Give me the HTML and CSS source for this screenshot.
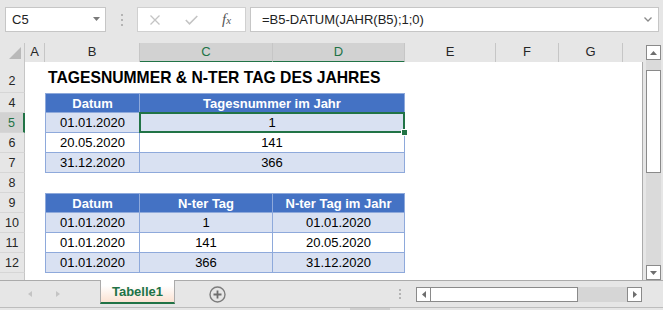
FILE: index.html
```html
<!DOCTYPE html>
<html lang="de">
<head>
<meta charset="utf-8">
<title>Tagesnummer</title>
<link rel="stylesheet" href="styles.css">
</head>
<body>
<div class="app">
  <div class="fbar">
    <div class="namebox"><span>C5</span><svg class="nb-arrow" width="7" height="4" viewBox="0 0 7 4"><polygon points="0,0 7,0 3.5,4" fill="#7a7a7a"/></svg></div>
    <div class="vdots"><i></i><i></i><i></i></div>
    <div class="fxbox">
      <svg class="ic-x" width="10" height="10" viewBox="0 0 10 10"><path d="M0.5 0.5 L9.5 9.5 M9.5 0.5 L0.5 9.5" stroke="#c4c4c4" stroke-width="1.3" fill="none"/></svg>
      <svg class="ic-ok" width="13" height="10" viewBox="0 0 13 10"><polyline points="0.8,5 4.5,8.8 12.3,1" stroke="#c4c4c4" stroke-width="1.6" fill="none"/></svg>
      <span class="fx">f<small>x</small></span>
    </div>
    <div class="finput"><span>=B5-DATUM(JAHR(B5);1;0)</span><svg width="8" height="5" viewBox="0 0 8 5"><polyline points="0.5,0.5 4,4 7.5,0.5" stroke="#8a8a8a" stroke-width="1.3" fill="none"/></svg></div>
  </div>

  <div class="main">
    <div class="sheet">
      <div class="row colhead">
        <div class="ch corner"><svg width="12" height="12" viewBox="0 0 12 12"><polygon points="12,0 12,12 0,12" fill="#b9b9b9"/></svg></div>
        <div class="ch">A</div>
        <div class="ch">B</div>
        <div class="ch sel">C</div>
        <div class="ch sel">D</div>
        <div class="ch">E</div>
        <div class="ch">F</div>
        <div class="ch">G</div>
        <div class="ch last"></div>
      </div>
      <div class="body">
        <div class="row r2"><div class="rh">2</div><div class="title">TAGESNUMMER &amp; N-TER TAG DES JAHRES</div></div>
        <div class="row"><div class="rh">4</div><div class="c cb first th">Datum</div><div class="c ccd th">Tagesnummer im Jahr</div></div>
        <div class="row"><div class="rh rsel">5</div><div class="c cb first band">01.01.2020</div><div class="c ccd band selcell">1<span class="selbox"></span><span class="handle"></span></div></div>
        <div class="row"><div class="rh">6</div><div class="c cb first">20.05.2020</div><div class="c ccd">141</div></div>
        <div class="row"><div class="rh">7</div><div class="c cb first band">31.12.2020</div><div class="c ccd band">366</div></div>
        <div class="row"><div class="rh">8</div></div>
        <div class="row"><div class="rh">9</div><div class="c cb first th">Datum</div><div class="c cc th">N-ter Tag</div><div class="c cd th">N-ter Tag im Jahr</div></div>
        <div class="row"><div class="rh">10</div><div class="c cb first band">01.01.2020</div><div class="c cc band">1</div><div class="c cd band">01.01.2020</div></div>
        <div class="row"><div class="rh">11</div><div class="c cb first">01.01.2020</div><div class="c cc">141</div><div class="c cd">20.05.2020</div></div>
        <div class="row"><div class="rh">12</div><div class="c cb first band">01.01.2020</div><div class="c cc band">366</div><div class="c cd band">31.12.2020</div></div>
        <div class="row r13"><div class="rh"></div></div>
      </div>
    </div>
    <div class="vscroll">
      <div class="sbtn"><svg width="7" height="4" viewBox="0 0 7 4"><polygon points="0,4 7,4 3.5,0" fill="#6e6e6e"/></svg></div>
      <div class="vtrack"><div class="vthumb"></div></div>
      <div class="sbtn"><svg width="7" height="4" viewBox="0 0 7 4"><polygon points="0,0 7,0 3.5,4" fill="#6e6e6e"/></svg></div>
    </div>
  </div>

  <div class="tabbar">
    <div class="nav"><i class="al"></i><i class="ar"></i></div>
    <div class="tab">Tabelle1</div>
    <svg class="plus" width="17" height="17" viewBox="0 0 17 17"><circle cx="8.5" cy="8.5" r="7.5" stroke="#7d7d7d" stroke-width="1.4" fill="none"/><path d="M8.5 4.5 V12.5 M4.5 8.5 H12.5" stroke="#6e6e6e" stroke-width="1.8"/></svg>
    <div class="hdots"><i></i><i></i><i></i></div>
    <div class="hscroll">
      <div class="sbtn"><svg width="4" height="7" viewBox="0 0 4 7"><polygon points="4,0 4,7 0,3.5" fill="#6e6e6e"/></svg></div>
      <div class="hthumb"></div>
      <div class="htrack"></div>
      <div class="sbtn"><svg width="4" height="7" viewBox="0 0 4 7"><polygon points="0,0 0,7 4,3.5" fill="#6e6e6e"/></svg></div>
    </div>
  </div>
  <div class="status"><i></i></div>
</div>
</body>
</html>
```
FILE: styles.css
```css
* { box-sizing: border-box; }
html, body { margin: 0; padding: 0; }
body { width: 663px; height: 310px; overflow: hidden; font-family: "Liberation Sans", Arial, sans-serif; }

.app { width: 663px; height: 310px; background: #e6e6e6; display: flex; flex-direction: column; }

/* formula bar */
.fbar { height: 43px; flex: none; display: flex; align-items: flex-start; padding-top: 7px; padding-left: 5px; }
.namebox { width: 101px; height: 25px; background: #fff; border: 1px solid #c6c6c6; display: flex; align-items: center; justify-content: space-between; padding: 0 5px 0 6px; font-size: 13px; color: #222; }
.nb-arrow { margin-top: -2px; }
.vdots { width: 2px; height: 25px; margin-left: 15px; display: flex; flex-direction: column; justify-content: center; gap: 3px; }
.vdots i { display: block; width: 2px; height: 2px; background: #b4b4b4; }
.fxbox { width: 109px; height: 25px; margin-left: 14px; background: #fff; border: 1px solid #d0d0d0; display: flex; align-items: center; padding-left: 12px; }
.ic-ok { margin-left: 25px; }
.fx { margin-left: 24px; font-family: "Liberation Serif", "Times New Roman", serif; font-style: italic; font-size: 15px; color: #555; line-height: 1; }
.fx small { font-size: 11px; }
.finput { width: 409px; height: 25px; margin-left: 4px; background: #fff; border: 1px solid #c6c6c6; display: flex; align-items: center; justify-content: space-between; padding: 0 6px 0 11px; font-size: 13px; color: #222; }

/* main area */
.main { height: 237px; flex: none; display: flex; }
.sheet { width: 643px; flex: none; display: flex; flex-direction: column; }
.row { display: grid; grid-template-columns: 25px 20px 95px 133px 132px 91px 63px 64px 19px; height: 20px; }
.colhead { height: 19px; background: #e6e6e6; }
.ch { border-right: 1px solid #c6c6c6; border-bottom: 1px solid #ababab; font-size: 13px; color: #262626; text-align: center; line-height: 18px; }
.ch.last { border-right: none; }
.ch.sel { background: #d2d2d2; color: #217346; border-bottom: 2px solid #217346; }
.corner { display: flex; align-items: flex-end; justify-content: flex-end; padding: 0 3px 3px 0; }
.corner svg { display: block; }

.body { width: 643px; flex: 1; background: #fff; border-right: 1px solid #ababab; display: flex; flex-direction: column; }
.body .row { background: #fff; }
.rh { grid-column: 1; background: #e6e6e6; border-right: 1px solid #c6c6c6; border-bottom: 1px solid #d6d6d6; font-size: 12.5px; color: #262626; display: flex; align-items: center; justify-content: center; }
.rh.rsel { background: #d2d2d2; color: #217346; border-right: 2px solid #217346; }
.r2 { height: 31px; }
.r2 .rh { align-items: flex-end; padding-bottom: 4px; }
.r13 { height: 7px; }
.r13 .rh { border-bottom: none; }
.title { grid-column: 3 / span 6; align-self: end; padding: 0 0 6px 3px; font-size: 15.7px; font-weight: bold; line-height: 18px; white-space: nowrap; color: #000; }

.c { display: flex; align-items: center; justify-content: center; font-size: 13px; color: #000; border-right: 1px solid #8ea9db; border-bottom: 1px solid #8ea9db; white-space: nowrap; }
.c.first { border-left: 1px solid #8ea9db; }
.cb { grid-column: 3; }
.cc { grid-column: 4; }
.cd { grid-column: 5; }
.ccd { grid-column: 4 / span 2; }
.th { background: #4472c4; color: #fff; font-weight: bold; border-top: 1px solid #8ea9db; }
.band { background: #d9e1f2; }

.selcell { position: relative; }
.selbox { position: absolute; left: -1px; top: -1px; width: 266px; height: 21px; border: 2px solid #217346; z-index: 2; }
.handle { position: absolute; left: 261px; top: 16px; width: 7px; height: 7px; background: #217346; border: 1px solid #fff; z-index: 3; }

/* vertical scrollbar */
.vscroll { width: 20px; flex: none; display: flex; flex-direction: column; padding: 2px 2px 0 3px; }
.sbtn { width: 15px; height: 15px; flex: none; background: #fff; border: 1px solid #8a8a8a; display: flex; align-items: center; justify-content: center; }
.vtrack { flex: 1; background: #dadada; padding-top: 10px; }
.vthumb { height: 103px; background: #fff; border: 1px solid #8a8a8a; }

/* tab bar */
.tabbar { height: 27px; flex: none; border-top: 1px solid #ababab; display: flex; align-items: center; }
.nav { width: 100px; height: 100%; display: flex; align-items: center; padding-left: 28px; gap: 24px; }
.nav i { display: block; width: 0; height: 0; border-top: 3.5px solid transparent; border-bottom: 3.5px solid transparent; }
.nav .al { border-right: 4px solid #c4c4c4; }
.nav .ar { border-left: 4px solid #c4c4c4; }
.tab { width: 75px; height: 24px; align-self: flex-start; margin-top: -1px; background: linear-gradient(#ffffff 25%, #fbe2d2); border-left: 1px solid #ababab; border-right: 1px solid #ababab; border-bottom: 2px solid #217346; color: #217346; font-weight: bold; font-size: 13px; display: flex; align-items: center; justify-content: center; padding-top: 1px; }
.plus { margin-left: 34px; flex: none; }
.hdots { margin-left: 173px; width: 2px; display: flex; flex-direction: column; gap: 2px; }
.hdots i { display: block; width: 2px; height: 2px; background: #b4b4b4; }
.hscroll { margin-left: 15px; width: 226px; height: 15px; display: flex; }
.hthumb { width: 147px; height: 15px; background: #fff; border-top: 1px solid #8a8a8a; border-bottom: 1px solid #8a8a8a; border-right: 1px solid #8a8a8a; }
.htrack { width: 49px; height: 15px; background: #d6d6d6; }

.status { height: 3px; flex: none; border-top: 1px solid #bdbdbd; }
.status i { display: block; margin-left: 350px; width: 40px; height: 2px; background: #cfcfcf; }
```
